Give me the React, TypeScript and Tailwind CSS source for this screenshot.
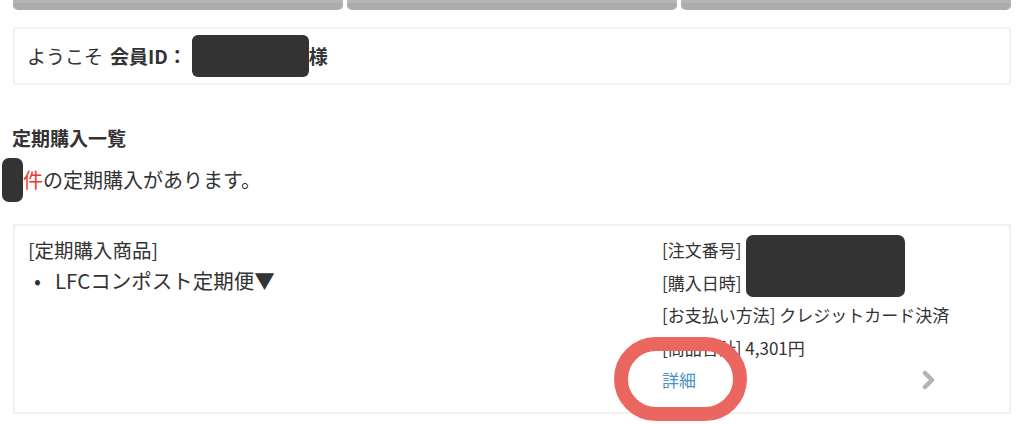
import React from 'react';

const Redact = ({ className }: { className: string }) => (
  <span className={`inline-block bg-[#333333] rounded-[6px] align-middle ${className}`}></span>
);

const App = () => {
  return (
    <div
      className="w-[1024px] h-[425px] bg-white text-[#333333] relative overflow-hidden"
      style={{ fontFamily: '"Noto Sans CJK JP", "Noto Sans", sans-serif' }}
    >
      {/* Tab buttons */}
      <div className="flex gap-[4px] px-[13px] w-[1024px]">
        <div className="flex-1 h-[10px] bg-[#acacac] border-t-[3px] border-[#b6b6b6] rounded-b-[5px]"></div>
        <div className="flex-1 h-[10px] bg-[#acacac] border-t-[3px] border-[#b6b6b6] rounded-b-[5px]"></div>
        <div className="flex-1 h-[10px] bg-[#acacac] border-t-[3px] border-[#b6b6b6] rounded-b-[5px]"></div>
      </div>

      {/* Welcome */}
      <div className="mx-[13px] w-[998px] mt-[17px] h-[58px] border-2 border-[#f0f0f0] rounded-[3px] flex items-center pl-[12px] text-[19px]">
        <span>ようこそ</span>
        <span className="font-bold ml-[7px] mr-[5px]">会員ID：</span>
        <Redact className="w-[117px] h-[42px]" />
        <span className="font-bold">様</span>
      </div>

      {/* Subscription list */}
      <h2 className="ml-[12px] mt-[39px] text-[19px] font-bold leading-[28px]">定期購入一覧</h2>
      <div className="flex items-center mt-[6px] h-[44px] text-[20px]">
        <Redact className="w-[21px] h-[44px] ml-[2px] rounded-[7px]" />
        <span className="text-[#e8382f]">件</span>
        <span>の定期購入があります。</span>
      </div>

      <div className="mx-[13px] w-[998px] mt-[22px] h-[190px] border-2 border-[#f0f0f0] flex">
        <div className="flex-1 pl-[13px] pt-[8px] text-[19.5px]">
          <div className="leading-[32px]">[定期購入商品]</div>
          <div className="leading-[28px] flex items-center text-[20.5px]">
            <span className="ml-[6px] mr-[14px]">•</span>
            <span>LFCコンポスト定期便▼</span>
          </div>
        </div>
        <div className="w-[347px] pt-[8px] relative text-[17px]">
          <div className="flex items-start">
            <div className="flex flex-col">
              <div className="leading-[32.5px]">[注文番号]</div>
              <div className="leading-[32.5px]">[購入日時]</div>
            </div>
            <Redact className="w-[159px] h-[62px] mt-[1px] ml-[4px] rounded-[7px]" />
          </div>
          <div className="leading-[32.5px]">[お支払い方法] クレジットカード決済</div>
          <div className="leading-[32.5px]">[商品合計] 4,301円</div>
          <div className="flex items-center justify-between w-[274px] leading-[32.5px]">
            <span className="text-[#4a90c8] text-[17px]">詳細</span>
            <svg width="14" height="20" viewBox="0 0 14 20">
              <path d="M3 3 L10 10 L3 17" fill="none" stroke="#b3b3b3" strokeWidth="4.5" strokeLinecap="round" strokeLinejoin="round" />
            </svg>
          </div>
        </div>
      </div>

      {/* Red annotation ring */}
      <div className="absolute left-[614px] top-[337px] w-[133px] h-[84px] border-[14px] border-[#ec6660] rounded-[42px]"></div>
    </div>
  );
};

export default App;
